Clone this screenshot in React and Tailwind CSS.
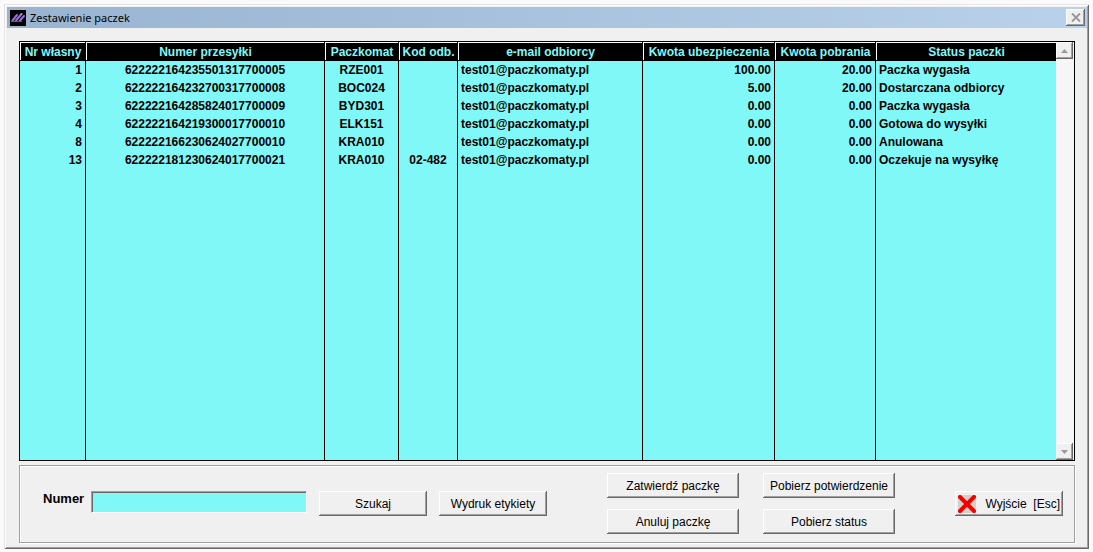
import React, { useState } from 'react';

const columns = [
  { key: 'id', label: 'Nr własny', width: 'w-[66px]', align: 'text-right' },
  { key: 'parcel', label: 'Numer przesyłki', width: 'w-[239px]', align: 'text-center' },
  { key: 'locker', label: 'Paczkomat', width: 'w-[74px]', align: 'text-center' },
  { key: 'zip', label: 'Kod odb.', width: 'w-[59px]', align: 'text-center' },
  { key: 'email', label: 'e-mail odbiorcy', width: 'w-[185px]', align: 'text-left' },
  { key: 'insurance', label: 'Kwota ubezpieczenia', width: 'w-[132px]', align: 'text-right' },
  { key: 'cod', label: 'Kwota pobrania', width: 'w-[101px]', align: 'text-right' },
  { key: 'status', label: 'Status paczki', width: '', align: 'text-left' },
];

const parcels = [
  { id: 1, parcel: '622222164235501317700005', locker: 'RZE001', zip: '', email: 'test01@paczkomaty.pl', insurance: '100.00', cod: '20.00', status: 'Paczka wygasła' },
  { id: 2, parcel: '622222164232700317700008', locker: 'BOC024', zip: '', email: 'test01@paczkomaty.pl', insurance: '5.00', cod: '20.00', status: 'Dostarczana odbiorcy' },
  { id: 3, parcel: '622222164285824017700009', locker: 'BYD301', zip: '', email: 'test01@paczkomaty.pl', insurance: '0.00', cod: '0.00', status: 'Paczka wygasła' },
  { id: 4, parcel: '622222164219300017700010', locker: 'ELK151', zip: '', email: 'test01@paczkomaty.pl', insurance: '0.00', cod: '0.00', status: 'Gotowa do wysyłki' },
  { id: 8, parcel: '622222166230624027700010', locker: 'KRA010', zip: '', email: 'test01@paczkomaty.pl', insurance: '0.00', cod: '0.00', status: 'Anulowana' },
  { id: 13, parcel: '622222181230624017700021', locker: 'KRA010', zip: '02-482', email: 'test01@paczkomaty.pl', insurance: '0.00', cod: '0.00', status: 'Oczekuje na wysyłkę' },
];

// classic raised edge: light on top/left, grey + dark grey on bottom/right
const raised =
  'bg-[#f0f0f0] shadow-[inset_-1px_-1px_0_#696969,inset_1px_1px_0_#ffffff,inset_-2px_-2px_0_#a0a0a0]';

const AppIcon = () => (
  <svg viewBox="0 0 16 16" className="w-4 h-4 shrink-0" aria-hidden="true">
    <rect width="16" height="16" fill="#000" />
    <g stroke="#9a6fd8" strokeWidth="2" strokeLinecap="round">
      <path d="M2.5 10.5 L7 5" />
      <path d="M6 10.5 L11.5 4" />
      <path d="M10 10.5 L14 6" />
    </g>
    <path d="M1 11.5 H12" stroke="#7445b8" strokeWidth="1" />
    <path d="M11 4.5 L12 3.5" stroke="#e3d2ff" strokeWidth="1" />
  </svg>
);

const CloseIcon = () => (
  <svg viewBox="0 0 10 9" className="w-[10px] h-[9px]" aria-hidden="true">
    <path d="M1 0.5 L9 8.5 M9 0.5 L1 8.5" stroke="#999" strokeWidth="2" />
  </svg>
);

const RedCross = () => (
  <svg viewBox="0 0 18 18" className="w-[18px] h-[18px] shrink-0" aria-hidden="true">
    <rect width="18" height="18" fill="#d4d0c8" />
    <path d="M2 2 L16 16 M16 2 L2 16" stroke="#f40000" strokeWidth="4" strokeLinecap="round" />
  </svg>
);

const ScrollButton = ({ label, points }) => (
  <button aria-label={label} className={`w-[17px] h-[17px] flex items-center justify-center ${raised}`}>
    <svg viewBox="0 0 7 4" className="w-[7px] h-1" aria-hidden="true">
      <polygon points={points} fill="#999" />
    </svg>
  </button>
);

const Button = ({ children, className = 'w-[108px]' }) => (
  <button className={`h-[25px] pt-px text-[12px] leading-4 whitespace-nowrap ${raised} ${className}`}>
    {children}
  </button>
);

const TitleBar = () => (
  <header className="h-[21px] pl-[3px] pr-[2px] flex items-center justify-between bg-linear-to-r from-[#99b4d1] to-[#b9d1ea]">
    <div className="flex items-center gap-1">
      <AppIcon />
      <h1 className="font-['Noto_Sans',sans-serif] text-[11px] leading-4">Zestawienie paczek</h1>
    </div>
    <button aria-label="Zamknij" className={`w-[19px] h-[17px] flex items-center justify-center ${raised}`}>
      <CloseIcon />
    </button>
  </header>
);

const ParcelTable = () => (
  <div className="flex-1 min-h-0 flex border border-black bg-[#80f8f8]">
    <table className="flex-1 h-full table-fixed border-separate border-spacing-0 text-[12px] leading-4 font-bold">
      <thead>
        <tr className="h-[19px] bg-black text-[#80f8f8]">
          {columns.map((col) => (
            <th
              key={col.key}
              className={`h-[19px] p-0 whitespace-nowrap border-r border-black last:border-r-0 ${col.width}`}
            >
              <div className="h-[18px] leading-[18px] border-t border-l border-white mb-px">{col.label}</div>
            </th>
          ))}
        </tr>
      </thead>
      <tbody>
        {parcels.map((row) => (
          <tr key={row.id} className="h-[18px]">
            {columns.map((col) => (
              <td
                key={col.key}
                className={`h-[18px] px-[3px] py-px whitespace-nowrap border-r border-black last:border-r-0 ${col.align}`}
              >
                {row[col.key]}
              </td>
            ))}
          </tr>
        ))}
        <tr aria-hidden="true">
          {columns.map((col) => (
            <td key={col.key} className="p-0 border-r border-black last:border-r-0" />
          ))}
        </tr>
      </tbody>
    </table>
    <div className="w-[18px] pr-px flex flex-col justify-between bg-[#f6f6f6]">
      <ScrollButton label="W górę" points="3.5,0 7,4 0,4" />
      <ScrollButton label="W dół" points="0,0 7,0 3.5,4" />
    </div>
  </div>
);

const ActionPanel = () => {
  const [number, setNumber] = useState('');

  return (
    <form
      onSubmit={(e) => e.preventDefault()}
      className="mt-1 pt-[7px] pb-2 pl-[23px] pr-[11px] flex border border-[#a0a0a0] shadow-[inset_1px_1px_0_#ffffff,1px_1px_0_#ffffff]"
    >
      <div className="pt-[18px] flex items-start">
        <label htmlFor="number" className="w-12 text-[13px] leading-4 font-bold">
          Numer
        </label>
        <input
          id="number"
          value={number}
          onChange={(e) => setNumber(e.target.value)}
          className="w-[216px] h-[22px] px-1 text-[12px] bg-[#80f8f8] outline-none border border-t-[#a0a0a0] border-l-[#a0a0a0] border-b-white border-r-white shadow-[inset_1px_1px_0_#696969]"
        />
        <div className="ml-3 flex gap-3">
          <Button>Szukaj</Button>
          <Button>Wydruk etykiety</Button>
        </div>
      </div>
      <div className="ml-[60px] grid grid-cols-[132px_132px] gap-x-6 gap-y-[11px]">
        <Button className="w-full">Zatwierdź paczkę</Button>
        <Button className="w-full">Pobierz potwierdzenie</Button>
        <Button className="w-full">Anuluj paczkę</Button>
        <Button className="w-full">Pobierz status</Button>
      </div>
      <div className="ml-auto pt-[18px]">
        <Button className="w-[108px] px-[3px] flex items-center justify-between">
          <RedCross />
          <span className="whitespace-pre">Wyjście  [Esc]</span>
        </Button>
      </div>
    </form>
  );
};

const App = () => (
  <div className="h-screen p-1 pb-[3px] flex bg-[#fafafa] text-black font-['Liberation_Sans',Arial,sans-serif]">
    <main className="flex-1 min-w-0 p-[2px] flex flex-col bg-[#f0f0f0] border-t border-l border-t-[#e3e3e3] border-l-[#e3e3e3] shadow-[inset_-1px_-1px_0_#696969,inset_1px_1px_0_#ffffff,inset_-2px_-2px_0_#a0a0a0]">
      <TitleBar />
      <div className="flex-1 min-h-0 pt-[13px] px-3 pb-1 flex flex-col">
        <ParcelTable />
        <ActionPanel />
      </div>
    </main>
  </div>
);

export default App;
